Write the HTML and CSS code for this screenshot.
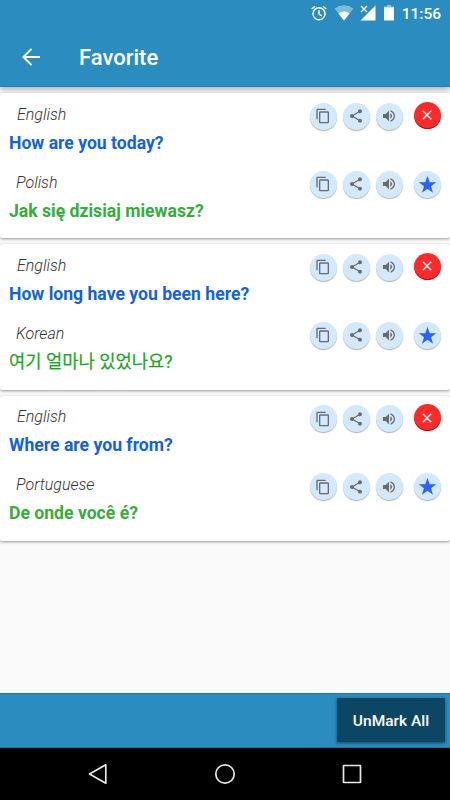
FILE: index.html
```html
<!DOCTYPE html>
<html lang="en">
<head>
<meta charset="utf-8">
<title>Favorite</title>
<link rel="stylesheet" href="styles.css">
</head>
<body>
<svg class="defs" aria-hidden="true">
  <symbol id="copy" viewBox="0 0 24 24"><path d="M16 1H4c-1.100 0-2 .9-2 2v14h2V3h12V1zm3 4H8c-1.100 0-2 .9-2 2v14c0 1.100.9 2 2 2h11c1.100 0 2-.9 2-2V7c0-1.100-.9-2-2-2zm0 16H8V7h11v14z"/></symbol>
  <symbol id="share" viewBox="0 0 24 24"><path d="M18 16.080c-.76 0-1.440.3-1.960.77L8.910 12.700c.05-.23.09-.46.09-.7s-.04-.47-.09-.7l7.050-4.110c.54.5 1.250.81 2.040.81 1.660 0 3-1.340 3-3s-1.340-3-3-3-3 1.340-3 3c0 .24.040.47.090.7L8.040 9.810C7.500 9.310 6.790 9 6 9c-1.660 0-3 1.340-3 3s1.340 3 3 3c.79 0 1.500-.31 2.040-.81l7.120 4.160c-.05.21-.08.43-.08.65 0 1.610 1.310 2.920 2.920 2.920s2.920-1.310 2.920-2.920-1.310-2.920-2.920-2.920z"/></symbol>
  <symbol id="sound" viewBox="0 0 24 24"><path d="M3 9v6h4l5 5V4L7 9H3zm13.500 3c0-1.770-1.020-3.290-2.500-4.030v8.050c1.480-.73 2.500-2.250 2.500-4.020zM14 3.230v2.060c2.890.86 5 3.540 5 6.710s-2.110 5.850-5 6.710v2.060c4.010-.91 7-4.490 7-8.770s-2.990-7.860-7-8.770z"/></symbol>
  <symbol id="star" viewBox="0 0 24 24"><path d="M12 2l2.500 7.400H22l-6 4.600 2.300 7.500-6.300-4.600-6.300 4.600L8 14 2 9.400h7.500z"/></symbol>
  <symbol id="close" viewBox="0 0 24 24"><path d="M19 6.410 17.590 5 12 10.590 6.410 5 5 6.410 10.590 12 5 17.590 6.410 19 12 13.410 17.590 19 19 17.590 13.410 12z"/></symbol>
</svg>
<div class="screen">
  <header class="appbar">
    <div class="status">
      <svg class="alarm" viewBox="0 0 16 16"><g fill="none" stroke="#fff" stroke-width="1.500"><circle cx="8" cy="8.800" r="6"/><path d="M8 5.300v3.800l2.800 1.700M.7 4 4 1.200M15.300 4 12 1.200"/></g></svg>
      <svg class="wifi" viewBox="0 0 20 16"><path fill="#fff" fill-opacity=".4" d="M.5 3.500Q10-2.800 19.500 3.500L10 15.500z"/><path fill="#fff" d="M4.300 8.300Q10 4.700 15.700 8.300L10 15.500z"/></svg>
      <svg class="signal" viewBox="0 0 16 16"><path fill="#fff" d="M15.500.5v15H.5z"/><path class="gap" d="M0 0h8v7H0z"/><path d="m1 1 6 6M7 1 1 7" stroke="#fff" stroke-width="1.300"/></svg>
      <svg class="battery" viewBox="0 0 10 16"><path fill="#fff" fill-opacity=".5" d="M3 0h4v1.500h3V3H0V1.500h3z"/><path fill="#fff" d="M0 2.500h10V15.500H0z"/></svg>
      <span class="clock">11:56</span>
    </div>
    <div class="titlebar">
      <svg class="back" viewBox="0 0 18 18"><path d="M18 9H1.500M9.500.9 1.400 9l8.100 8.100" fill="none" stroke="#fff" stroke-width="2"/></svg>
      <h1>Favorite</h1>
    </div>
  </header>

  <main class="list">
    <article class="card">
      <section class="entry source">
        <div class="text"><p class="lang">English</p><p class="phrase">How are you today?</p></div>
        <div class="actions">
          <button class="round"><svg><use href="#copy"/></svg></button>
          <button class="round"><svg><use href="#share"/></svg></button>
          <button class="round"><svg><use href="#sound"/></svg></button>
          <button class="round remove"><svg><use href="#close"/></svg></button>
        </div>
      </section>
      <section class="entry target">
        <div class="text"><p class="lang">Polish</p><p class="phrase">Jak się dzisiaj miewasz?</p></div>
        <div class="actions">
          <button class="round"><svg><use href="#copy"/></svg></button>
          <button class="round"><svg><use href="#share"/></svg></button>
          <button class="round"><svg><use href="#sound"/></svg></button>
          <button class="round mark"><svg><use href="#star"/></svg></button>
        </div>
      </section>
    </article>

    <article class="card">
      <section class="entry source">
        <div class="text"><p class="lang">English</p><p class="phrase">How long have you been here?</p></div>
        <div class="actions">
          <button class="round"><svg><use href="#copy"/></svg></button>
          <button class="round"><svg><use href="#share"/></svg></button>
          <button class="round"><svg><use href="#sound"/></svg></button>
          <button class="round remove"><svg><use href="#close"/></svg></button>
        </div>
      </section>
      <section class="entry target">
        <div class="text"><p class="lang">Korean</p><p class="phrase korean" lang="ko">여기 얼마나 있었나요?</p></div>
        <div class="actions">
          <button class="round"><svg><use href="#copy"/></svg></button>
          <button class="round"><svg><use href="#share"/></svg></button>
          <button class="round"><svg><use href="#sound"/></svg></button>
          <button class="round mark"><svg><use href="#star"/></svg></button>
        </div>
      </section>
    </article>

    <article class="card">
      <section class="entry source">
        <div class="text"><p class="lang">English</p><p class="phrase">Where are you from?</p></div>
        <div class="actions">
          <button class="round"><svg><use href="#copy"/></svg></button>
          <button class="round"><svg><use href="#share"/></svg></button>
          <button class="round"><svg><use href="#sound"/></svg></button>
          <button class="round remove"><svg><use href="#close"/></svg></button>
        </div>
      </section>
      <section class="entry target">
        <div class="text"><p class="lang">Portuguese</p><p class="phrase">De onde você é?</p></div>
        <div class="actions">
          <button class="round"><svg><use href="#copy"/></svg></button>
          <button class="round"><svg><use href="#share"/></svg></button>
          <button class="round"><svg><use href="#sound"/></svg></button>
          <button class="round mark"><svg><use href="#star"/></svg></button>
        </div>
      </section>
    </article>
  </main>

  <footer class="bottombar"><button class="unmark">UnMark All</button></footer>
  <nav class="navbar">
    <svg viewBox="0 0 22 22"><path d="M18.800 1.800v18.400L2.500 11z"/></svg>
    <svg viewBox="0 0 22 22"><circle cx="11" cy="11" r="9.200"/></svg>
    <svg viewBox="0 0 22 22"><rect x="2.500" y="2.500" width="17" height="17" rx=".5"/></svg>
  </nav>
</div>
</body>
</html>
```
FILE: styles.css
```css
* { box-sizing: border-box; }
body { margin: 0; font-family: Roboto, "Noto Sans CJK KR", sans-serif; }
h1, p { margin: 0; }
button { border: 0; padding: 0; font: inherit; }
.defs { display: none; }

.screen { width: 450px; height: 800px; display: flex; flex-direction: column; background: #fafafa; overflow: hidden; }

.appbar { height: 87px; flex: none; background: #2a8cbf; color: #fff; border-bottom: 1px solid #1785c0; box-shadow: 0 2px 6px rgba(0, 0, 0, .35); }
.status { height: 28px; display: flex; justify-content: flex-end; align-items: center; padding: 0 9px 0 0; }
.status svg { height: 16px; flex: none; position: relative; top: -1px; }
.alarm { width: 16px; margin-right: 7px; }
.wifi { width: 20px; margin-right: 6px; }
.signal { width: 16px; margin-right: 8px; }
.signal .gap { fill: #2a8cbf; }
.battery { width: 10px; margin-right: 8px; }
.clock { font-size: 15.5px; font-weight: 500; line-height: 28px; }
.titlebar { height: 58px; display: flex; align-items: center; padding-left: 22px; }
.back { width: 18px; height: 18px; }
.titlebar h1 { margin-left: 39px; font-size: 22px; font-weight: 500; line-height: 28px; padding-top: 2px; }

.list { flex: 1; padding-top: 6px; display: flex; flex-direction: column; gap: 6px; }
.card { height: 145.400px; flex: none; background: #fff; border-radius: 2px; box-shadow: 0 1px 3px rgba(0, 0, 0, .4); }
.entry { height: 68px; display: flex; justify-content: space-between; padding: 11.600px 9px 0 9px; }
.lang { font-size: 16px; font-style: italic; font-weight: 300; line-height: 20px; color: #333; padding-left: 7px; }
.source .lang { padding-left: 8px; }
.phrase { margin-top: 6px; font-size: 17.600px; font-weight: 700; line-height: 24px; white-space: nowrap; }
.source .phrase { color: #1262df; }
.target .phrase { color: #35ad3c; }
.target .korean { font-size: 17.700px; font-weight: 400; color: #1ca522; -webkit-text-stroke: .2px currentColor; }

.actions { display: flex; gap: 6px; margin: -2px .4px 0 0; }
.round { width: 27px; height: 27px; border-radius: 50%; background: #d3e9ff; color: #6b6b6b; display: flex; align-items: center; justify-content: center; box-shadow: 0 1px 1px rgba(0, 0, 0, .3); }
.round svg { width: 16px; height: 16px; fill: currentColor; }
.round:last-child { margin-left: 5px; }
.remove { background: #ff2a2a; color: #fff; margin-top: -1px; box-shadow: inset 0 -1px 0 #c40000; }
.mark { color: #2962ff; }
.mark svg { width: 21px; height: 21px; }

.bottombar { height: 55px; flex: none; background: #2a8cbf; border-top: 1px solid #1b7cb1; border-bottom: 1px solid #1d7098; display: flex; justify-content: flex-end; padding: 4px 5px 0 0; }
.unmark { width: 108px; height: 44px; background: #0b4765; color: #fff; font-size: 15.500px; font-weight: 500; padding-top: 1px; box-shadow: 0 1px 3px rgba(0, 0, 0, .5); }

.navbar { height: 52px; flex: none; background: #000; display: flex; justify-content: center; gap: 105px; align-items: center; }
.navbar svg { width: 22px; height: 22px; fill: none; stroke: #e8e8e8; stroke-width: 1.700; stroke-linejoin: round; }
```
